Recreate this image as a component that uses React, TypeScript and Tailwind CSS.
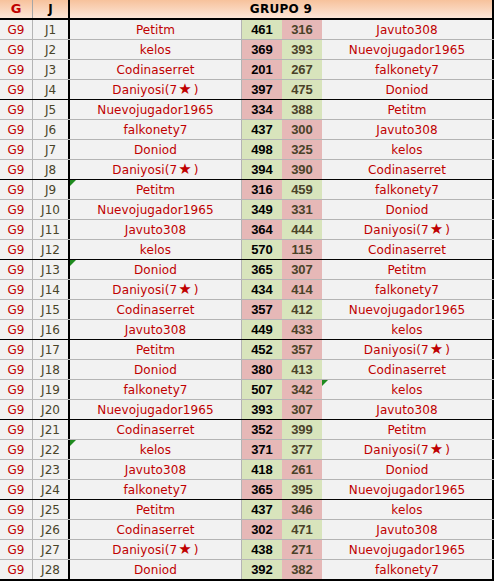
import React from "react";

type Row = [string, number, number, string, number?];

const rows: Row[] = [
  ["Petitm", 461, 316, "Javuto308"],
  ["kelos", 369, 393, "Nuevojugador1965"],
  ["Codinaserret", 201, 267, "falkonety7"],
  ["Daniyosi(7★)", 397, 475, "Doniod"],
  ["Nuevojugador1965", 334, 388, "Petitm"],
  ["falkonety7", 437, 300, "Javuto308"],
  ["Doniod", 498, 325, "kelos"],
  ["Daniyosi(7★)", 394, 390, "Codinaserret"],
  ["Petitm", 316, 459, "falkonety7", 1],
  ["Nuevojugador1965", 349, 331, "Doniod"],
  ["Javuto308", 364, 444, "Daniyosi(7★)"],
  ["kelos", 570, 115, "Codinaserret"],
  ["Doniod", 365, 307, "Petitm", 1],
  ["Daniyosi(7★)", 434, 414, "falkonety7"],
  ["Codinaserret", 357, 412, "Nuevojugador1965"],
  ["Javuto308", 449, 433, "kelos"],
  ["Petitm", 452, 357, "Daniyosi(7★)"],
  ["Doniod", 380, 413, "Codinaserret"],
  ["falkonety7", 507, 342, "kelos", 2],
  ["Nuevojugador1965", 393, 307, "Javuto308"],
  ["Codinaserret", 352, 399, "Petitm"],
  ["kelos", 371, 377, "Daniyosi(7★)", 1],
  ["Javuto308", 418, 261, "Doniod"],
  ["falkonety7", 365, 395, "Nuevojugador1965"],
  ["Petitm", 437, 346, "kelos"],
  ["Codinaserret", 302, 471, "Javuto308"],
  ["Daniyosi(7★)", 438, 271, "Nuevojugador1965"],
  ["Doniod", 392, 382, "falkonety7"],
];

const Tri = () => (
  <svg className="absolute left-0 top-0" width="6" height="6" viewBox="0 0 6 6">
    <polygon points="0,0 6,0 0,6" fill="#1f8a1f" />
  </svg>
);

const Name = ({ text }: { text: string }) => {
  if (text.includes("★")) {
    const base = text.replace("(7★)", "");
    return (
      <span className="flex items-center">
        {base}(7<span className="text-[15px] leading-none ml-[1px] mr-[2px]">★</span>)
      </span>
    );
  }
  return <span>{text}</span>;
};

export default function App() {
  const sans = { fontFamily: '"DejaVu Sans", Verdana, sans-serif' };
  return (
    <div className="w-[494px] h-[581px] bg-white" style={sans}>
      <div className="flex h-[20px] border-b-2 border-black bg-gradient-to-b from-[#f7c29c] to-[#fce6d8] text-[12px] font-bold">
        <div className="w-[33px] border-r border-[#a6a6a6] flex items-center justify-center text-[#c00000] text-[13px]">G</div>
        <div className="w-[37px] border-r-2 border-black flex items-center justify-center text-black">J</div>
        <div className="w-[424px] border-r-2 border-black flex items-center justify-center text-black tracking-[0.3px]">GRUPO 9</div>
      </div>
      {rows.map((r, i) => {
        const [n1, s1, s2, n2, tri] = r;
        const last = i === rows.length - 1;
        const groupEnd = (i + 1) % 4 === 0;
        const border = last
          ? "border-b-2 border-black h-[21px]"
          : groupEnd
          ? "border-b border-black h-[20px]"
          : "border-b border-[#b4b4b4] h-[20px]";
        const green = "bg-[#d8e4bc]";
        const pink = "bg-[#e6b8b7]";
        return (
          <div key={i} className={`flex bg-[#f2f2f2] text-[12px] leading-none ${border}`}>
            <div className="w-[33px] border-r border-[#b4b4b4] flex items-center justify-center text-[#c00000]">G9</div>
            <div className="w-[37px] border-r-2 border-black flex items-center justify-center text-[#494429]">J{i + 1}</div>
            <div className="relative w-[172px] border-r border-[#b4b4b4] flex items-center justify-center text-[#c00000] tracking-[0.1px]">
              {tri === 1 && <Tri />}
              <Name text={n1} />
            </div>
            <div
              className={`w-[40px] flex items-center justify-center font-bold text-black text-[13px] ${s1 > s2 ? green : pink}`}
              style={{ fontFamily: '"Liberation Sans", Arial, sans-serif' }}
            >
              {s1}
            </div>
            <div
              className={`w-[40px] flex items-center justify-center font-bold text-[#4a4228] text-[13px] ${s2 > s1 ? green : pink}`}
              style={{ fontFamily: '"Liberation Sans", Arial, sans-serif' }}
            >
              {s2}
            </div>
            <div className="relative w-[172px] border-r-2 border-black flex items-center justify-center text-[#c00000] tracking-[0.1px]">
              {tri === 2 && <Tri />}
              <Name text={n2} />
            </div>
          </div>
        );
      })}
    </div>
  );
}
